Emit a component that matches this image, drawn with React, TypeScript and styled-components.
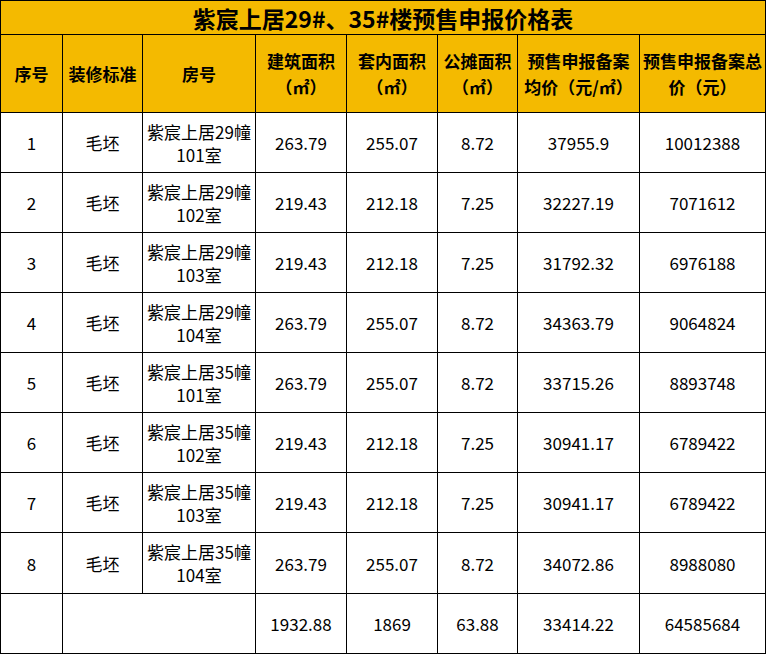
import React from "react";
import styled, { createGlobalStyle } from "styled-components";

const GlobalStyle = createGlobalStyle`
  html, body {
    margin: 0;
    padding: 0;
    background: #ffffff;
  }
  body {
    font-family: "Noto Sans CJK SC", "Noto Sans", sans-serif;
  }
`;

const Sheet = styled.div`
  display: grid;
  grid-template-columns: 61px 79px 112px 90px 90px 79px 121px 125px;
  grid-template-rows: 33px 77px repeat(7, 59px) 60px 59px;
  gap: 1px;
  padding: 1px;
  width: 766px;
  box-sizing: border-box;
  background: #000000;
  font-family: "Noto Sans CJK SC", "Noto Sans", sans-serif;
  color: #000000;
`;

const Cell = styled.div<{ $span?: number }>`
  grid-column: span ${(p) => p.$span ?? 1};
  background: #ffffff;
  display: flex;
  align-items: center;
  justify-content: center;
  text-align: center;
  font-size: 17px;
  line-height: 23px;
  white-space: nowrap;
`;

const TitleCell = styled(Cell)`
  grid-column: 1 / -1;
  background: #f4ba00;
  font-size: 23px;
  font-weight: 700;
  line-height: 30px;
  padding-top: 1px;
`;

const HeadCell = styled(Cell)`
  background: #f4ba00;
  font-weight: 700;
  line-height: 26px;
`;

const Lines = styled.span`
  display: flex;
  flex-direction: column;
  align-items: center;
`;

const headers: string[][] = [
  ["序号"],
  ["装修标准"],
  ["房号"],
  ["建筑面积", "（㎡）"],
  ["套内面积", "（㎡）"],
  ["公摊面积", "（㎡）"],
  ["预售申报备案", "均价（元/㎡）"],
  ["预售申报备案总", "价（元）"],
];

type Row = [string, string, string, string, string, string, string, string];

const rows: Row[] = [
  ["1", "毛坯", "29幢101室", "263.79", "255.07", "8.72", "37955.9", "10012388"],
  ["2", "毛坯", "29幢102室", "219.43", "212.18", "7.25", "32227.19", "7071612"],
  ["3", "毛坯", "29幢103室", "219.43", "212.18", "7.25", "31792.32", "6976188"],
  ["4", "毛坯", "29幢104室", "263.79", "255.07", "8.72", "34363.79", "9064824"],
  ["5", "毛坯", "35幢101室", "263.79", "255.07", "8.72", "33715.26", "8893748"],
  ["6", "毛坯", "35幢102室", "219.43", "212.18", "7.25", "30941.17", "6789422"],
  ["7", "毛坯", "35幢103室", "219.43", "212.18", "7.25", "30941.17", "6789422"],
  ["8", "毛坯", "35幢104室", "263.79", "255.07", "8.72", "34072.86", "8988080"],
];

const totals = ["1932.88", "1869", "63.88", "33414.22", "64585684"];

function roomLines(code: string) {
  const building = code.slice(0, 3);
  const room = code.slice(3);
  return (
    <Lines>
      <span>紫宸上居{building}</span>
      <span>{room}</span>
    </Lines>
  );
}

export default function App() {
  return (
    <>
      <GlobalStyle />
      <Sheet>
        <TitleCell>紫宸上居29#、35#楼预售申报价格表</TitleCell>
        {headers.map((h, i) => (
          <HeadCell key={`h${i}`}>
            <Lines>
              {h.map((line, j) => (
                <span key={j}>{line}</span>
              ))}
            </Lines>
          </HeadCell>
        ))}
        {rows.map((r) =>
          r.map((v, i) => (
            <Cell key={`${r[0]}-${i}`}>{i === 2 ? roomLines(v) : v}</Cell>
          ))
        )}
        <Cell />
        <Cell $span={2} />
        {totals.map((t, i) => (
          <Cell key={`t${i}`}>{t}</Cell>
        ))}
      </Sheet>
    </>
  );
}
